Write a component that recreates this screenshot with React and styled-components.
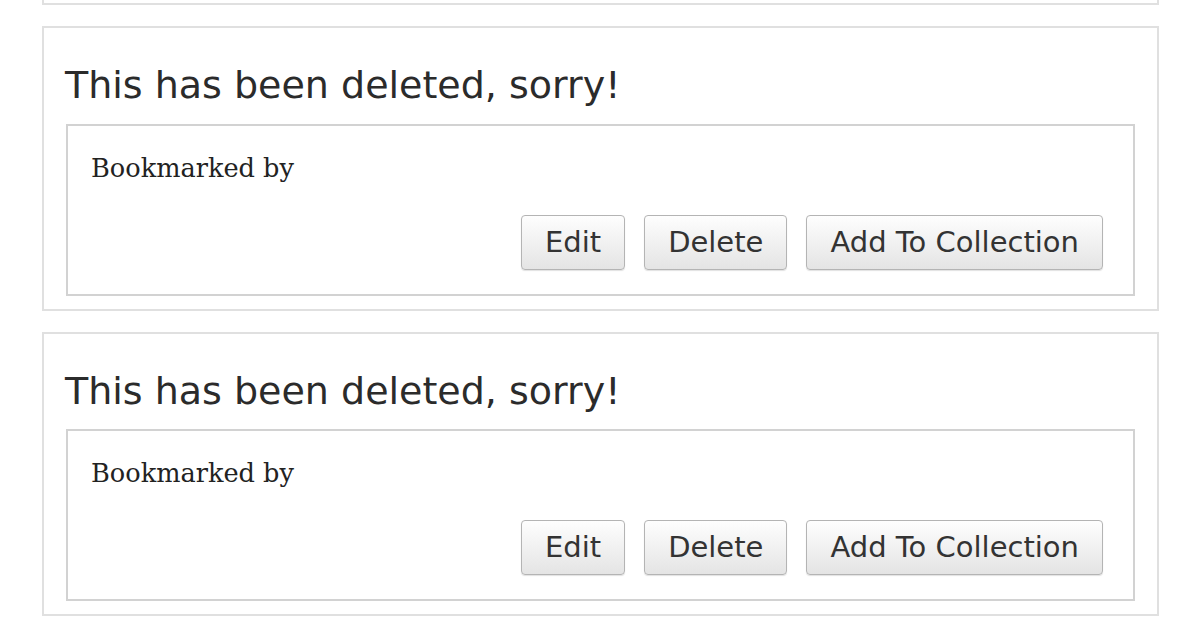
import React from "react";
import styled, { createGlobalStyle } from "styled-components";

const GlobalStyle = createGlobalStyle`
  body {
    margin: 0;
    background: #ffffff;
    overflow: hidden;
  }
`;

const Page = styled.div`
  padding: 0 41px 0 42px;
  height: 617px;
  overflow: hidden;
`;

const List = styled.ul`
  list-style: none;
  margin: -279px 0 0;
  padding: 0;
  display: flex;
  flex-direction: column;
  gap: 21px;
`;

const Card = styled.li`
  border: 2px solid #e0e0e0;
  padding: 35px 22px 13px 22px;
  background: #fff;
`;

const Title = styled.h2`
  margin: 0 0 15px -1px;
  font-family: "DejaVu Sans", Verdana, sans-serif;
  font-size: 38px;
  font-weight: normal;
  line-height: 1.2;
  color: #2b2b2b;
`;

const Bookmark = styled.div`
  border: 2px solid #d2d2d2;
  padding: 27px 30px 24px 23px;
  display: flex;
  flex-direction: column;
  gap: 31px;
`;

const Byline = styled.p`
  margin: 0;
  font-family: "DejaVu Serif", Georgia, serif;
  font-size: 25.6px;
  line-height: 1.2;
  color: #222;
`;

const Actions = styled.div`
  display: flex;
  justify-content: flex-end;
  gap: 19px;
`;

const Button = styled.button`
  height: 55px;
  padding: 0 23px;
  border: 1px solid #b4b4b4;
  border-radius: 4px;
  background: linear-gradient(#fefefe, #e4e4e4);
  box-shadow: 0 1px 1px rgba(0, 0, 0, 0.12);
  font-family: "DejaVu Sans", Verdana, sans-serif;
  font-size: 29px;
  color: #333;
  cursor: pointer;
`;

const items = [1, 2, 3];

const App = () => {
  return (
    <Page>
      <GlobalStyle />
      <List>
        {items.map((id) => (
          <Card key={id}>
            <Title>This has been deleted, sorry!</Title>
            <Bookmark>
              <Byline>Bookmarked by</Byline>
              <Actions>
                <Button>Edit</Button>
                <Button>Delete</Button>
                <Button>Add To Collection</Button>
              </Actions>
            </Bookmark>
          </Card>
        ))}
      </List>
    </Page>
  );
};

export default App;
